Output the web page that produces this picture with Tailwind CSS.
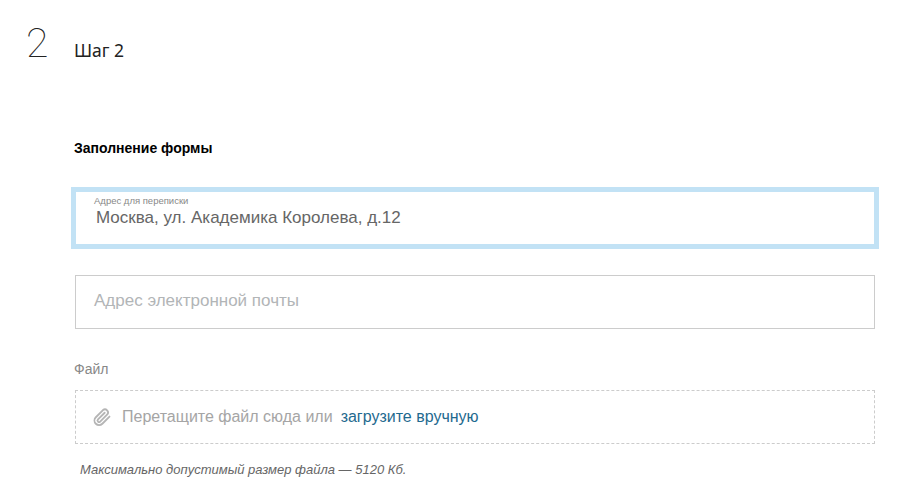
<!DOCTYPE html>
<html lang="ru">
<head>
    <meta charset="UTF-8">
    <title>Шаг 2</title>
    <script src="https://cdn.jsdelivr.net/npm/@tailwindcss/browser@4"></script>
</head>
<body class="bg-white font-['Liberation_Sans',sans-serif]">
    <div class="flex w-[909px] h-[496px] overflow-hidden pl-[27px]">
        <div class="w-[48px] shrink-0 pt-[17px]">
            <span class="block -ml-[1px] text-[41px] leading-[52px] font-thin text-[#222] font-['Roboto',sans-serif]">2</span>
        </div>
        <div class="w-[800px]">
            <h2 class="pt-[39px] -ml-[1px] text-[17.5px] leading-[22px] text-[#222] font-['Noto_Sans',sans-serif]">Шаг 2</h2>
            <h3 class="mt-[77px] -ml-[1px] text-[14px] leading-[20px] font-bold text-black">Заполнение формы</h3>
            <!-- поле в фокусе -->
            <div class="mt-[33px] h-[54px] border border-[#c2e2f5] ring-4 ring-[#c2e2f5] pl-[20px] pt-[3px]">
                <label class="block -ml-[2px] text-[9.5px] leading-[11px] text-[#888]">Адрес для переписки</label>
                <div class="mt-[1px] text-[17px] leading-[22px] text-[#666]">Москва, ул. Академика Королева, д.12</div>
            </div>
            <div class="mt-[30px] h-[54px] border border-[#ccc] pl-[18px] pb-[2px] flex items-center">
                <span class="text-[17px] text-[#b2b5b7]">Адрес электронной почты</span>
            </div>
            <div class="mt-[30px] -ml-[1px] text-[14px] leading-[20px] text-[#888]">Файл</div>
            <div class="mt-[11px] h-[54px] border border-dashed border-[#ccc] flex items-center pl-[16px]">
                <svg class="w-[20px] h-[22px] text-[#b5b5b5]" viewBox="0 0 24 24" fill="none" stroke="currentColor" stroke-width="2.2" stroke-linecap="round" stroke-linejoin="round">
                    <path d="M21 11.5l-8.6 8.6a5.5 5.5 0 0 1-7.8-7.8l8.6-8.6a3.7 3.7 0 0 1 5.2 5.2l-8.6 8.6a1.8 1.8 0 0 1-2.6-2.6l8-8"/>
                </svg>
                <span class="ml-[10px] text-[16px] text-[#a5a5a5]">Перетащите файл сюда или</span>
                <a href="#" class="ml-[8px] text-[16px] text-[#1f6a8f]">загрузите вручную</a>
            </div>
            <p class="mt-[17px] pl-[5px] text-[13px] leading-[18px] italic text-[#666]">Максимально допустимый размер файла — 5120 Кб.</p>
        </div>
    </div>
</body>
</html>
